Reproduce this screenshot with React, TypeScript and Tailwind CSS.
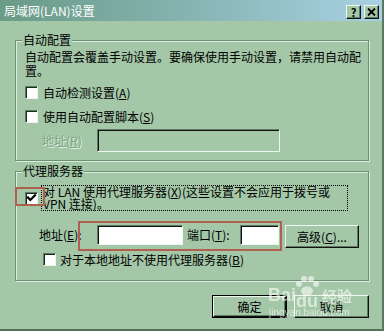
import React from "react";

const Box = ({ checked = false }: { checked?: boolean }) => (
  <span className="relative inline-block w-[13px] h-[13px] shrink-0 bg-white border border-t-[#5e7c64] border-l-[#5e7c64] border-b-[#eef7ef] border-r-[#eef7ef] shadow-[inset_1px_1px_0_#1b2a1e]">
    {checked && (
      <svg width="11" height="11" viewBox="0 0 11 11" className="absolute left-0 top-0">
        <path d="M2 4.5 L4.3 7 L9 2.2" stroke="#000" strokeWidth="2.2" fill="none" strokeLinecap="square" />
      </svg>
    )}
  </span>
);

const M = ({ k }: { k: string }) => (
  <span>
    (<span className="underline underline-offset-[1px]">{k}</span>)
  </span>
);

const Btn = ({ children, w, def = false }: { children: React.ReactNode; w: string; def?: boolean }) => (
  <div className={`${w} h-[23px] ${def ? "border border-black" : ""}`}>
    <div className="w-full h-full flex items-center justify-center border border-t-[#eef7ef] border-l-[#eef7ef] border-b-[#111] border-r-[#111] shadow-[inset_-1px_-1px_0_#5e7c64] leading-[14px]">
      {children}
    </div>
  </div>
);

export default function App() {
  return (
    <div className="relative w-[384px] h-[331px] overflow-hidden bg-[#a3c7a7] border-r-2 border-b-2 border-r-[#5b7862] border-b-[#56705c] font-['Noto_Sans_CJK_SC','Noto_Sans',sans-serif] text-[12px] leading-[14px] text-black">
      {/* title bar */}
      <div className="h-[21px] flex justify-between bg-gradient-to-r from-[#6a9b86] via-[#86b4b2] to-[#a9d1e4] pl-[4px] pr-[3px]">
        <div className="flex items-center text-white">局域网(LAN)设置</div>
        <div className="flex gap-[3px] mt-[5px]">
          <div className="w-[15px] h-[14px] flex items-center justify-center bg-[#a3c7a7] border border-t-[#eef7ef] border-l-[#eef7ef] border-b-[#111] border-r-[#111] shadow-[inset_-1px_-1px_0_#5e7c64] font-bold text-[11px] leading-[11px]">
            ?
          </div>
          <div className="w-[15px] h-[14px] flex items-center justify-center bg-[#a3c7a7] border border-t-[#eef7ef] border-l-[#eef7ef] border-b-[#111] border-r-[#111] shadow-[inset_-1px_-1px_0_#5e7c64]">
            <svg width="9" height="8" viewBox="0 0 9 8">
              <path d="M1 0.5 L8 7.5 M8 0.5 L1 7.5" stroke="#000" strokeWidth="1.8" />
            </svg>
          </div>
        </div>
      </div>

      <div className="pl-[15px] pr-[13px]">
        {/* group 1 */}
        <div className="relative mt-[19px] h-[121px] border border-[#6d8f73] shadow-[inset_1px_1px_0_#d9eedb,1px_1px_0_#d9eedb] pl-[9px] pt-[9px]">
          <span className="absolute left-[6px] -top-[8px] bg-[#a3c7a7] px-[1px]">自动配置</span>
          <p>
            自动配置会覆盖手动设置。要确保使用手动设置，请禁用自动配
            <br />
            置。
          </p>
          <div className="mt-[8px] h-[13px] flex items-center gap-[5px]">
            <Box />
            <span>
              自动检测设置<M k="A" />
            </span>
          </div>
          <div className="mt-[11px] h-[13px] flex items-center gap-[5px]">
            <Box />
            <span>
              使用自动配置脚本<M k="S" />
            </span>
          </div>
          <div className="mt-[6px] flex items-center">
            <span className="ml-[17px] w-[55px] text-[#7da582] [text-shadow:1px_1px_0_#e4f1e5]">
              地址<M k="R" />
            </span>
            <div className="w-[183px] h-[23px] border border-t-[#5e7c64] border-l-[#5e7c64] border-b-[#eef7ef] border-r-[#eef7ef] shadow-[inset_1px_1px_0_#111]" />
          </div>
        </div>

        {/* group 2 */}
        <div className="relative mt-[10px] h-[110px] border border-[#6d8f73] shadow-[inset_1px_1px_0_#d9eedb,1px_1px_0_#d9eedb] pl-[9px] pt-[13px]">
          <span className="absolute left-[6px] -top-[8px] bg-[#a3c7a7] px-[1px]">代理服务器</span>
          <div className="flex items-center">
            <Box checked />
            <div className="ml-[3px] w-[307px] border border-dotted border-black px-[1px] leading-[12px]">
              对 LAN 使用代理服务器<M k="X" />(这些设置不会应用于拨号或
              <br />
              VPN 连接)。
            </div>
          </div>
          <div className="mt-[14px] flex items-start">
            <span className="ml-[14px] w-[58px] leading-[20px]">
              地址<M k="E" />:
            </span>
            <div className="w-[86px] h-[20px] bg-white border border-t-[#5e7c64] border-l-[#5e7c64] border-b-[#eef7ef] border-r-[#eef7ef] shadow-[inset_1px_1px_0_#111]" />
            <span className="ml-[4px] w-[53px] leading-[20px]">
              端口<M k="T" />:
            </span>
            <div className="w-[39px] h-[20px] bg-white border border-t-[#5e7c64] border-l-[#5e7c64] border-b-[#eef7ef] border-r-[#eef7ef] shadow-[inset_1px_1px_0_#111]" />
            <div className="ml-[6px]">
              <Btn w="w-[74px]">
                高级<M k="C" />...
              </Btn>
            </div>
          </div>
          <div className="mt-[5px] ml-[18px] h-[13px] flex items-center gap-[4px]">
            <Box />
            <span>
              对于本地地址不使用代理服务器<M k="B" />
            </span>
          </div>
          {/* red highlight rectangles */}
          <div className="absolute left-[-1px] top-[15px] w-[30px] h-[19px] border-2 border-[#b0604e]" />
          <div className="absolute left-[62px] top-[49px] w-[204px] h-[30px] border-2 border-[#b0604e]" />
        </div>

        {/* buttons */}
        <div className="mt-[14px] flex justify-end gap-[7px]">
          <Btn w="w-[75px]" def>
            确定
          </Btn>
          <Btn w="w-[75px]">取消</Btn>
        </div>
      </div>

      {/* watermark */}
      <div className="absolute left-[266px] top-[276px] w-[100px] h-[45px] pointer-events-none text-white opacity-60">
        <span className="absolute left-[2px] top-[10px] text-[18px] leading-[18px] font-bold font-['Liberation_Sans',sans-serif]">Bai</span>
        <svg className="absolute left-[28px] top-[0px]" width="26" height="20" viewBox="0 0 26 20">
          <circle cx="5" cy="8" r="3" fill="white" />
          <circle cx="10" cy="3" r="3" fill="white" />
          <circle cx="17" cy="3" r="3" fill="white" />
          <circle cx="22" cy="8" r="3" fill="white" />
          <ellipse cx="13" cy="15" rx="6" ry="4.5" fill="white" />
        </svg>
        <span className="absolute left-[30px] top-[16px] text-[18px] leading-[18px] font-bold font-['Liberation_Sans',sans-serif]">du</span>
        <span className="absolute left-[56px] top-[12px] text-[15px] leading-[16px] font-bold">经验</span>
        <span className="absolute left-[3px] top-[32px] text-[10px] leading-[10px] font-['Liberation_Sans',sans-serif]">jingyan.baidu.com</span>
      </div>
    </div>
  );
}
